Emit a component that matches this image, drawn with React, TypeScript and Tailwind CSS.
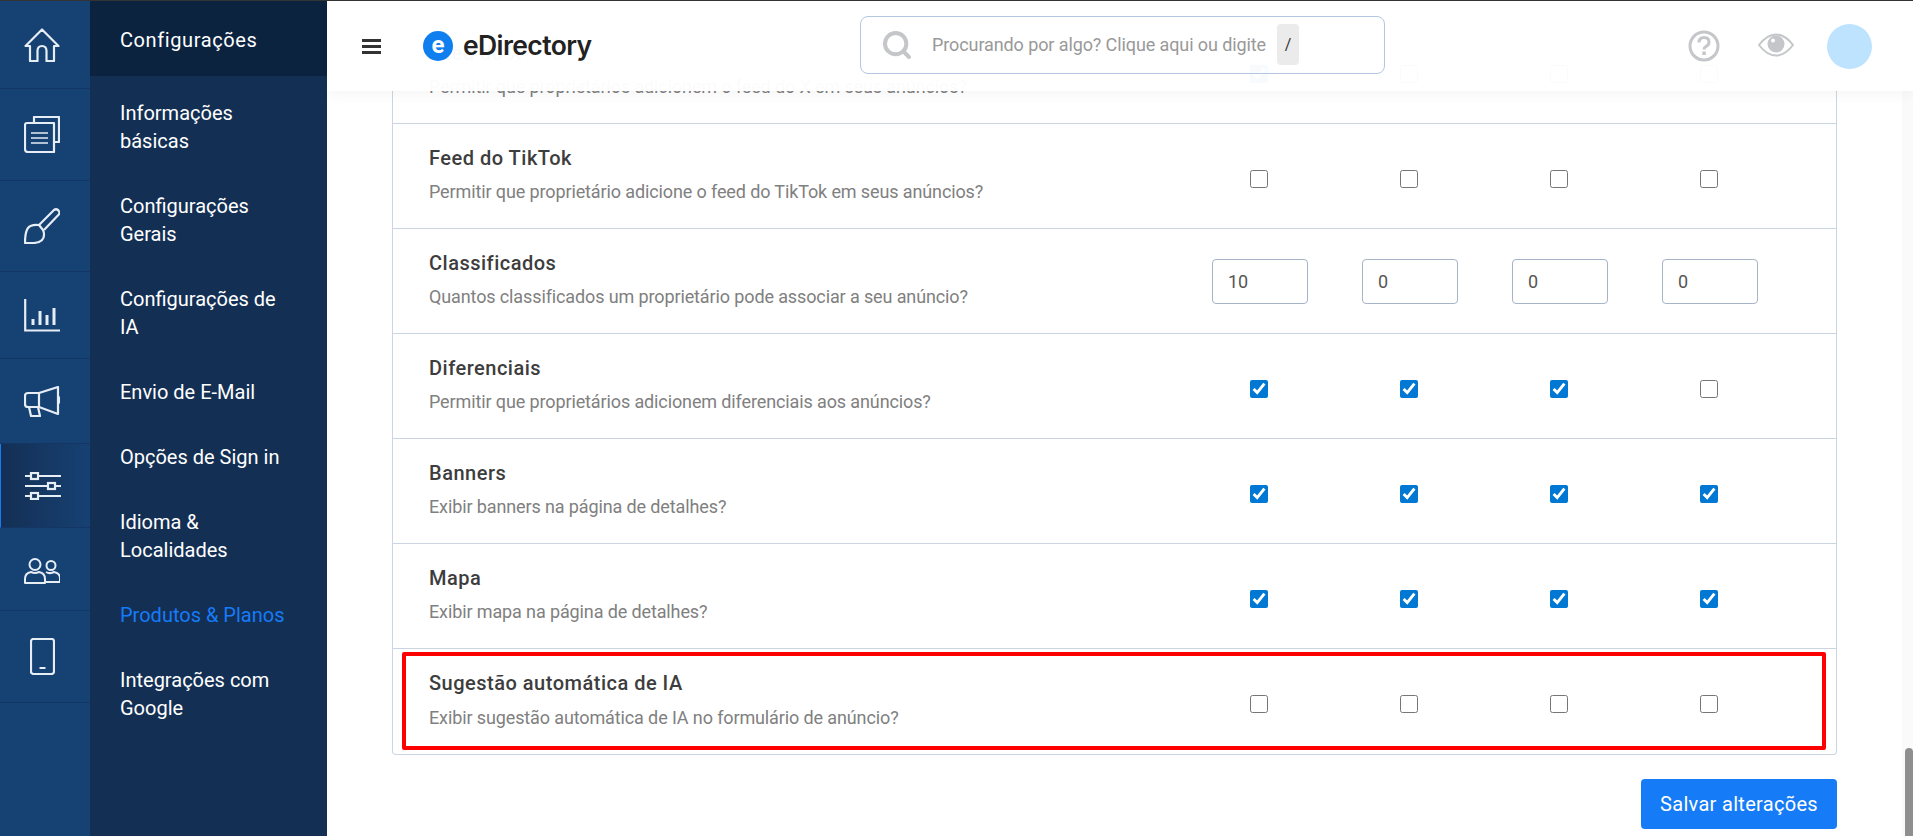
import { Search } from "lucide-react";

const sideItems = [
  { height: "h-[88px]", icon: <HomeIcon /> },
  { height: "h-[92px]", icon: <DocsIcon /> },
  { height: "h-[91px]", icon: <BrushIcon /> },
  { height: "h-[87px]", icon: <ChartIcon /> },
  { height: "h-[85px]", icon: <MegaphoneIcon /> },
  { height: "h-[84px]", icon: <SlidersIcon />, active: true },
  { height: "h-[83px]", icon: <UsersIcon /> },
  { height: "h-[92px]", icon: <PhoneIcon /> },
];

const navItems = [
  "Informações básicas",
  "Configurações Gerais",
  "Configurações de IA",
  "Envio de E-Mail",
  "Opções de Sign in",
  "Idioma & Localidades",
  "Produtos & Planos",
  "Integrações com Google",
];

const rows = [
  { title: "Feed do X", text: "Permitir que proprietários adicionem o feed do X em seus anúncios?", checks: [true, false, false, false] },
  { title: "Feed do TikTok", text: "Permitir que proprietário adicione o feed do TikTok em seus anúncios?", checks: [false, false, false, false] },
  { title: "Classificados", text: "Quantos classificados um proprietário pode associar a seu anúncio?", values: ["10", "0", "0", "0"] },
  { title: "Diferenciais", text: "Permitir que proprietários adicionem diferenciais aos anúncios?", checks: [true, true, true, false] },
  { title: "Banners", text: "Exibir banners na página de detalhes?", checks: [true, true, true, true] },
  { title: "Mapa", text: "Exibir mapa na página de detalhes?", checks: [true, true, true, true] },
  { title: "Sugestão automática de IA", text: "Exibir sugestão automática de IA no formulário de anúncio?", checks: [false, false, false, false], marked: true },
];

function HomeIcon() {
  return (
    <svg width="36" height="34" viewBox="0 0 36 34" fill="none" stroke="#e6edf5" strokeWidth="2.200" strokeLinejoin="round">
      <path d="M1.500 18 18 1.500 34.500 18H30v15h-7.500V23q0-5-4.500-5t-4.500 5v10H6V18z" />
    </svg>
  );
}

function DocsIcon() {
  return (
    <svg width="36" height="37" viewBox="0 0 36 37" fill="none" stroke="#e6edf5" strokeWidth="2.200" strokeLinejoin="round">
      <path d="M10 7V1h25v25h-5" />
      <path d="M1 9q0-2 2-2h27v29H4q-3 0-3-3z" />
      <path d="M7 17h17M7 22h17M7 27h17" strokeWidth="1.700" />
    </svg>
  );
}

function BrushIcon() {
  return (
    <svg width="36" height="36" viewBox="0 0 36 36" fill="none" stroke="#e6edf5" strokeWidth="2.200" strokeLinejoin="round">
      <path d="M15 17 30 2q2-1.500 4 0l.8 1q1.200 2 0 3.500L20 22" />
      <path d="M15 17q-8-1-11 3-3 4-3 15h9q10-1 10-8 0-3-1-5l-4-5z" />
    </svg>
  );
}

function ChartIcon() {
  return (
    <svg width="36" height="33" viewBox="0 0 36 33" fill="none" stroke="#e6edf5" strokeWidth="2.200">
      <path d="M1.200 0v31.500H36" />
      <path d="M9 20v6M16 12v14M23 16v10M30 9v17" strokeWidth="3" />
    </svg>
  );
}

function MegaphoneIcon() {
  return (
    <svg width="36" height="31" viewBox="0 0 36 31" fill="none" stroke="#e6edf5" strokeWidth="2.200" strokeLinejoin="round">
      <path d="M15 7H4q-3 0-3 3v8q0 3 3 3h11z" />
      <path d="M15 7 34 1v27l-19-7" />
      <path d="M5 21l2 9h9l-2-9" />
      <path d="M34 11q2 .5 2 3t-2 3" />
    </svg>
  );
}

function SlidersIcon() {
  return (
    <svg width="36" height="28" viewBox="0 0 36 28" fill="none" stroke="#e6edf5" strokeWidth="2.200">
      <path d="M0 4h6M13 4h23M0 14h23M30 14h6M0 24h6M13 24h23" />
      <rect x="6" y="1" width="7" height="6" />
      <rect x="23" y="11" width="7" height="6" />
      <rect x="6" y="21" width="7" height="6" />
    </svg>
  );
}

function UsersIcon() {
  return (
    <svg className="mt-[3px]" width="36" height="26" viewBox="0 0 36 26" fill="none" stroke="#e6edf5" strokeWidth="2" strokeLinejoin="round">
      <circle cx="11" cy="6.500" r="5.500" />
      <path d="M1 25v-4q0-6 6-7 4 2 8 0 6 1 6 7v4z" />
      <circle cx="27" cy="7.500" r="4.500" />
      <path d="M22 14q2.500 1.500 5 1 1 0 3-1 6 1 6 6v4H21" />
    </svg>
  );
}

function PhoneIcon() {
  return (
    <svg width="25" height="37" viewBox="0 0 25 37" fill="none" stroke="#e6edf5" strokeWidth="2.200">
      <rect x="1" y="1" width="23" height="35" rx="2.500" />
      <path d="M9.500 30h6" strokeWidth="2" />
    </svg>
  );
}

function Sidebar() {
  return (
    <aside className="flex w-[327px] shrink-0">
      <div className="w-[90px] shrink-0 bg-[#164173]">
        {sideItems.map((item, index) => (
          <div
            key={index}
            className={
              item.active
                ? "flex items-center justify-center border-b border-l border-[#133664] border-l-[#167bf7] bg-gradient-to-r from-[#142f54] to-[#164173] pr-[6px] " + item.height
                : "flex items-center justify-center border-b border-[#133664] pr-[6px] " + item.height
            }
          >
            {item.icon}
          </div>
        ))}
      </div>
      <nav className="flex-1 bg-[#142f54] text-[20px] leading-[28px]">
        <div className="flex h-[75px] items-center bg-[#0c2340] pt-[2px] pl-[30px] tracking-[0.6px] text-white">Configurações</div>
        <ul className="pt-[4px] pr-[30px] pl-[30px]">
          {navItems.map((item) => (
            <li key={item} className={item === "Produtos & Planos" ? "py-[18.500px] text-[#167bf7]" : "py-[18.500px] text-white"}>
              {item}
            </li>
          ))}
        </ul>
      </nav>
    </aside>
  );
}

function Header() {
  return (
    <header className="absolute top-0 right-0 left-0 flex h-[90px] items-center bg-white/[0.97] pl-[35px] shadow-[0_4px_12px_rgba(0,0,0,0.04)]">
      <div className="flex w-[19px] flex-col gap-[3px]">
        <span className="h-[3px] bg-[#333]" />
        <span className="h-[3px] bg-[#333]" />
        <span className="h-[3px] bg-[#333]" />
      </div>
      <div className="ml-[42px] flex h-[30px] w-[30px] items-center justify-center rounded-full bg-[#0f7ff0] pb-[3px] text-[24px] leading-none font-bold text-white">e</div>
      <span className="ml-[10px] w-[130px] font-['Inter',sans-serif] text-[26.500px] font-semibold tracking-[-0.6px] text-[#222]">eDirectory</span>
      <div className="-mt-[3px] ml-[267px] flex h-[58px] w-[525px] items-center rounded-lg border border-[#b5c6e0] pl-[20px]">
        <Search size={32} strokeWidth={3} color="#c5c6c9" />
        <span className="ml-[19px] text-[18px] tracking-[-0.1px] text-[#999]">Procurando por algo? Clique aqui ou digite</span>
        <span className="ml-[11px] flex h-[41px] w-[22px] items-center justify-center rounded bg-[#ebebeb] text-[16px] text-[#333]">/</span>
      </div>
      <div className="ml-auto flex items-center pr-[41px]">
        <svg width="32" height="32" viewBox="0 0 32 32" fill="none">
          <circle cx="16" cy="16" r="14" stroke="#c5c6c9" strokeWidth="3" />
          <path d="M11 12.500q0-5 5-5t5 4.500q0 3-3 4.500-2 1-2 3" stroke="#c5c6c9" strokeWidth="3" />
          <rect x="14.300" y="21.500" width="3.500" height="3.500" fill="#c5c6c9" />
        </svg>
        <svg className="-mt-[3px] ml-[38px]" width="36" height="24" viewBox="0 0 36 24" fill="none">
          <path d="M1 12Q9 1.500 18 1.500T35 12Q27 22.500 18 22.500T1 12z" stroke="#c5c6c9" strokeWidth="2" />
          <circle cx="18" cy="11" r="8.500" fill="#c5c6c9" />
          <circle cx="15" cy="7.500" r="2" fill="#fff" />
        </svg>
        <div className="ml-[33px] h-[45px] w-[45px] rounded-full bg-[#bde3ff]" />
      </div>
    </header>
  );
}

function SettingRow({ row, last }: { row: (typeof rows)[number]; last: boolean }) {
  return (
    <div className={last ? "relative flex h-[105px] items-center" : "relative flex h-[105px] items-center border-b border-[#cbd5e1]"}>
      <div className="min-w-0 flex-1 pb-[2px] pl-[36px]">
        <div className="text-[20px] leading-[27.600px] font-medium tracking-[0.5px] text-[#3d3d3d]">{row.title}</div>
        <div className="mt-[8px] text-[18px] leading-[24.800px] tracking-[-0.12px] text-[#808080]">{row.text}</div>
      </div>
      <div className="mr-[52px] grid w-[600px] grid-cols-4 justify-items-center">
        {row.values
          ? row.values.map((value, index) => (
              <input
                key={index}
                readOnly
                value={value}
                className="ml-[2px] h-[45px] w-[96px] rounded border border-[#a6b4c8] bg-white pl-[15px] text-[18px] text-[#555]"
              />
            ))
          : row.checks?.map((checked, index) => (
              <input
                key={index}
                type="checkbox"
                readOnly
                checked={checked}
                className="mt-[5px] h-[18px] w-[18px] accent-[#0078d4]"
              />
            ))}
      </div>
      {row.marked ? (
        <div className="absolute top-[3px] right-[10px] bottom-[4px] left-[9px] rounded-[2px] border-4 border-[#ff0000]" />
      ) : null}
    </div>
  );
}

export default function App() {
  return (
    <div className="flex h-[836px] w-[1913px] flex-col overflow-hidden bg-white font-['Roboto',sans-serif]">
      <div className="h-px shrink-0 bg-[#333]" />
      <div className="flex min-h-0 flex-1">
        <Sidebar />
        <main className="relative flex min-w-0 flex-1">
          <div className="min-w-0 flex-1 overflow-hidden pt-[18px] pr-[65px] pl-[65px]">
            <div className="rounded border border-t-0 border-[#cbd5e1]">
              {rows.map((row, index) => (
                <SettingRow key={row.title} row={row} last={index === rows.length - 1} />
              ))}
            </div>
            <div className="mt-[24px] flex justify-end">
              <button className="h-[50px] w-[196px] rounded bg-[#167bf7] text-[20px] tracking-[0.3px] text-white">Salvar alterações</button>
            </div>
          </div>
          <div className="flex w-[11px] shrink-0 flex-col bg-[#fafafa]">
            <div className="mt-auto ml-[3px] h-[88px] rounded-t bg-[#8f8f8f]" />
          </div>
          <Header />
        </main>
      </div>
    </div>
  );
}
